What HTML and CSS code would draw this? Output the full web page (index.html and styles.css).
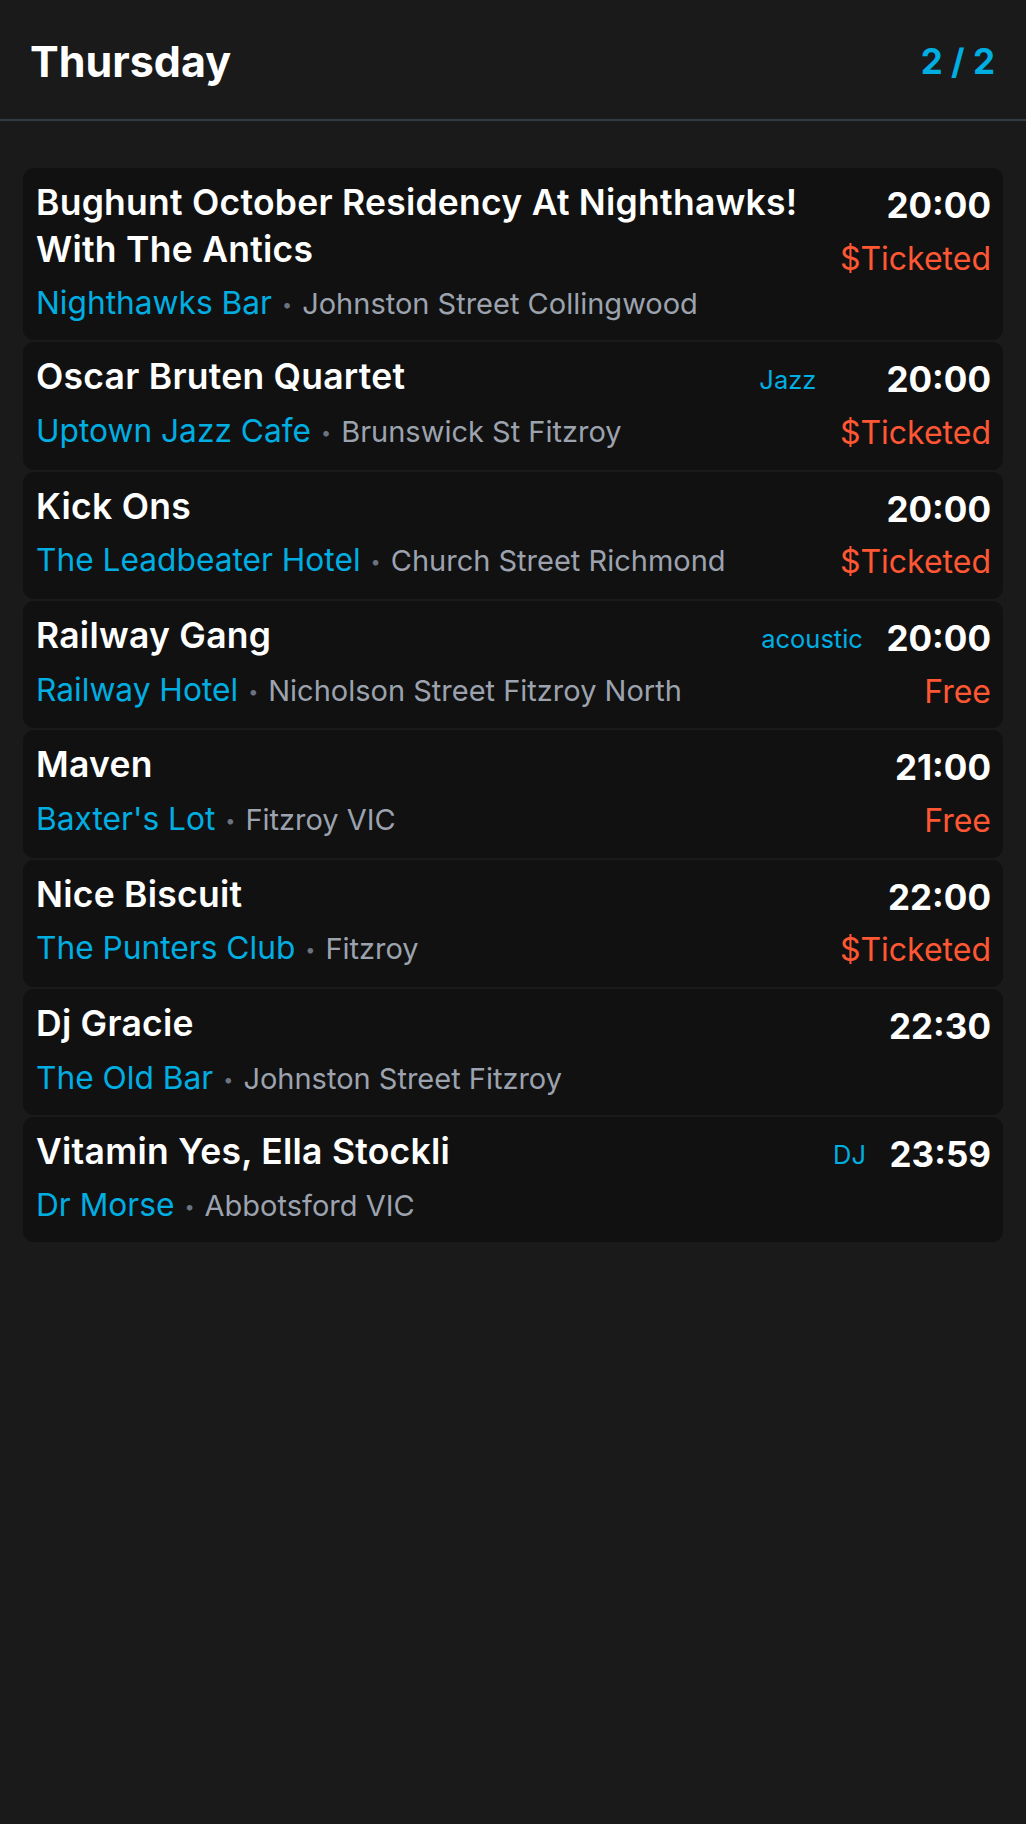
FILE: index.html
```html
<!DOCTYPE html>
<html lang="en">
<head>
<meta charset="utf-8">
<title>Thursday</title>
<link rel="stylesheet" href="styles.css">
</head>
<body>
<header class="topbar">
  <h1 class="day">Thursday</h1>
  <div class="pager">2 / 2</div>
</header>
<main class="list">
  <article class="gig">
    <div class="gig-main">
      <div class="gig-head"><h2 class="gig-title">Bughunt October Residency At Nighthawks! With The Antics</h2></div>
      <div class="gig-place"><span class="venue">Nighthawks Bar</span><span class="sep">•</span><span class="addr">Johnston Street Collingwood</span></div>
    </div>
    <div class="gig-side"><div class="time">20:00</div><div class="price">$Ticketed</div></div>
  </article>
  <article class="gig">
    <div class="gig-main">
      <div class="gig-head"><h2 class="gig-title">Oscar Bruten Quartet</h2><span class="tag">Jazz</span></div>
      <div class="gig-place"><span class="venue">Uptown Jazz Cafe</span><span class="sep">•</span><span class="addr">Brunswick St Fitzroy</span></div>
    </div>
    <div class="gig-side"><div class="time">20:00</div><div class="price">$Ticketed</div></div>
  </article>
  <article class="gig">
    <div class="gig-main">
      <div class="gig-head"><h2 class="gig-title">Kick Ons</h2></div>
      <div class="gig-place"><span class="venue">The Leadbeater Hotel</span><span class="sep">•</span><span class="addr">Church Street Richmond</span></div>
    </div>
    <div class="gig-side"><div class="time">20:00</div><div class="price">$Ticketed</div></div>
  </article>
  <article class="gig">
    <div class="gig-main">
      <div class="gig-head"><h2 class="gig-title">Railway Gang</h2><span class="tag">acoustic</span></div>
      <div class="gig-place"><span class="venue">Railway Hotel</span><span class="sep">•</span><span class="addr">Nicholson Street Fitzroy North</span></div>
    </div>
    <div class="gig-side"><div class="time">20:00</div><div class="price">Free</div></div>
  </article>
  <article class="gig">
    <div class="gig-main">
      <div class="gig-head"><h2 class="gig-title">Maven</h2></div>
      <div class="gig-place"><span class="venue">Baxter's Lot</span><span class="sep">•</span><span class="addr">Fitzroy VIC</span></div>
    </div>
    <div class="gig-side"><div class="time">21:00</div><div class="price">Free</div></div>
  </article>
  <article class="gig">
    <div class="gig-main">
      <div class="gig-head"><h2 class="gig-title">Nice Biscuit</h2></div>
      <div class="gig-place"><span class="venue">The Punters Club</span><span class="sep">•</span><span class="addr">Fitzroy</span></div>
    </div>
    <div class="gig-side"><div class="time">22:00</div><div class="price">$Ticketed</div></div>
  </article>
  <article class="gig">
    <div class="gig-main">
      <div class="gig-head"><h2 class="gig-title">Dj Gracie</h2></div>
      <div class="gig-place"><span class="venue">The Old Bar</span><span class="sep">•</span><span class="addr">Johnston Street Fitzroy</span></div>
    </div>
    <div class="gig-side"><div class="time">22:30</div></div>
  </article>
  <article class="gig">
    <div class="gig-main">
      <div class="gig-head"><h2 class="gig-title">Vitamin Yes, Ella Stockli</h2><span class="tag">DJ</span></div>
      <div class="gig-place"><span class="venue">Dr Morse</span><span class="sep">•</span><span class="addr">Abbotsford VIC</span></div>
    </div>
    <div class="gig-side"><div class="time">23:59</div></div>
  </article>
</main>
</body>
</html>
```
FILE: styles.css
```css
* { box-sizing: border-box; }
html, body {
  margin: 0;
  background: #1a1a1a;
  font-family: Inter, "Noto Sans", "Liberation Sans", sans-serif;
  color: #fff;
}
.topbar {
  height: 121px;
  display: flex;
  align-items: center;
  justify-content: space-between;
  padding: 3px 31px 0 30px;
  border-bottom: 2px solid #333a46;
}
.day {
  margin: 0;
  font-size: 43px;
  font-weight: 700;
}
.pager {
  font-size: 35px;
  font-weight: 700;
  color: #00aee2;
}
.list {
  padding: 47px 23px;
  display: flex;
  flex-direction: column;
  gap: 2px;
}
.gig {
  background: #111111;
  border-radius: 11px;
  padding: 12px 12px 13px 13px;
  display: flex;
  gap: 23.5px;
}
.gig-main {
  flex: 1;
  min-width: 0;
}
.gig-head {
  display: flex;
  align-items: baseline;
}
.gig-title {
  flex: 1;
  margin: 0;
  font-size: 35.5px;
  letter-spacing: 0.25px;
  line-height: 46.7px;
  font-weight: 600;
  color: #fff;
}
.tag {
  font-size: 25.5px;
  line-height: 1.2;
  color: #00aee2;
}
.gig-place {
  margin-top: 7px;
  font-size: 31.7px;
  line-height: 46.7px;
  white-space: nowrap;
}
.venue {
  color: #00aee2;
}
.sep {
  font-size: 18px;
  line-height: 1;
  color: #6b7280;
  margin: 0 10px;
  vertical-align: 3px;
}
.addr {
  font-size: 29px;
  line-height: 1;
  color: #9ca3af;
}
.gig-side {
  padding-top: 2px;
  display: flex;
  flex-direction: column;
  align-items: flex-end;
}
.time {
  font-size: 35px;
  line-height: 46.7px;
  font-weight: 700;
}
.price {
  margin-top: 7px;
  font-size: 32px;
  line-height: 46.7px;
  color: #ff5733;
}
```
